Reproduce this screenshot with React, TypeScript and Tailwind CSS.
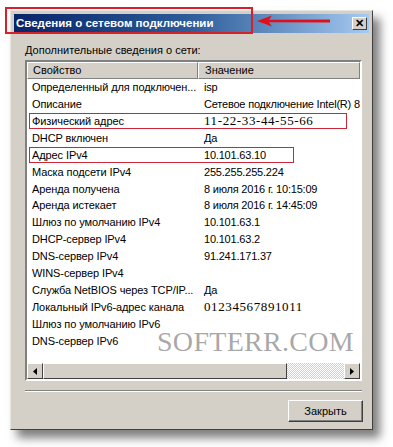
import React from 'react';

const rows: { name: string; value: string; serif?: boolean; mark?: string }[] = [
  { name: 'Определенный для подключен...', value: 'isp' },
  { name: 'Описание', value: 'Сетевое подключение Intel(R) 8' },
  { name: 'Физический адрес', value: '11-22-33-44-55-66', serif: true, mark: 'w-[318px]' },
  { name: 'DHCP включен', value: 'Да' },
  { name: 'Адрес IPv4', value: '10.101.63.10', mark: 'w-[265px]' },
  { name: 'Маска подсети IPv4', value: '255.255.255.224' },
  { name: 'Аренда получена', value: '8 июля 2016 г. 10:15:09' },
  { name: 'Аренда истекает', value: '8 июля 2016 г. 14:45:09' },
  { name: 'Шлюз по умолчанию IPv4', value: '10.101.63.1' },
  { name: 'DHCP-сервер IPv4', value: '10.101.63.2' },
  { name: 'DNS-сервер IPv4', value: '91.241.171.37' },
  { name: 'WINS-сервер IPv4', value: '' },
  { name: 'Служба NetBIOS через TCP/IP...', value: 'Да' },
  { name: 'Локальный IPv6-адрес канала', value: '01234567891011', serif: true },
  { name: 'Шлюз по умолчанию IPv6', value: '' },
  { name: 'DNS-сервер IPv6', value: '' },
];

export default function App() {
  return (
    <div className="relative w-[393px] h-[447px] bg-white overflow-hidden font-['Liberation_Sans',sans-serif] text-[11px] text-black">
      {/* dialog window */}
      <div className="ml-[10px] mt-[10px] w-[363px] h-[420px] bg-[#d4d0c8] p-[3px] flex flex-col shadow-[7px_8px_9px_rgba(0,0,0,0.5)] border border-t-[#e8e6e0] border-l-[#e8e6e0] border-r-[#404040] border-b-[#404040]">
        {/* title bar */}
        <div className="h-[19px] shrink-0 flex items-center justify-between pl-[2px] pr-[2px] bg-gradient-to-r from-[#0a246a] via-[#2d5d9a] to-[#a6caf0]">
          <span className="text-white font-bold text-[11.5px] leading-none">Сведения о сетевом подключении</span>
          <div className="w-[15px] h-[13px] bg-[#d4d0c8] border border-t-white border-l-white border-r-[#404040] border-b-[#404040] flex items-center justify-center text-[11px] font-bold leading-none">
            ✕
          </div>
        </div>

        <div className="flex-1 flex flex-col pl-[11px] pr-[7px]">
          <div className="mt-[10px] h-[15px] leading-[15px]">Дополнительные сведения о сети:</div>

          {/* list view */}
          <div className="mt-[2px] h-[321px] flex flex-col bg-white border-2 border-t-[#808080] border-l-[#808080] border-r-white border-b-white overflow-hidden">
            <div className="h-[17px] shrink-0 flex bg-[#d4d0c8]">
              <div className="w-[171px] pl-[5px] leading-[15px] border border-t-white border-l-white border-r-[#808080] border-b-[#808080]">Свойство</div>
              <div className="flex-1 pl-[6px] leading-[15px] border border-t-white border-l-white border-r-[#808080] border-b-[#808080]">Значение</div>
            </div>

            <div className="relative flex-1 flex flex-col overflow-hidden">
              {rows.map((r) => (
                <div key={r.name} className="relative h-[16.9px] shrink-0 flex items-center whitespace-nowrap">
                  <div className="w-[171px] shrink-0 pl-[5px] overflow-hidden tracking-[-0.1px]">{r.name}</div>
                  <div className={`pl-[6px] ${r.serif ? "font-['Liberation_Serif',serif] text-[13px] tracking-[0.6px]" : 'tracking-[-0.2px]'}`}>{r.value}</div>
                  {r.mark && (
                    <div className={`absolute left-[2px] top-0 h-[16px] border border-[#c8283a] ${r.mark}`} />
                  )}
                </div>
              ))}
              <div className="absolute left-[130px] top-[249px] font-['Liberation_Serif',serif] text-[28px] leading-none text-[#8c8c8c]/75 tracking-[0.3px]">
                SOFTERR.COM
              </div>
            </div>

            {/* horizontal scrollbar */}
            <div className="h-[16px] shrink-0 flex bg-[repeating-conic-gradient(#d4d0c8_0_25%,#ffffff_0_50%)] bg-[length:2px_2px]">
              <div className="w-[16px] bg-[#d4d0c8] border border-t-white border-l-white border-r-[#404040] border-b-[#404040] flex items-center justify-center">
                <svg width="4" height="7" viewBox="0 0 4 7"><path d="M4 0 L0 3.5 L4 7 Z" fill="#000" /></svg>
              </div>
              <div className="w-[244px] bg-[#d4d0c8] border border-t-white border-l-white border-r-[#404040] border-b-[#404040]" />
              <div className="flex-1" />
              <div className="w-[16px] bg-[#d4d0c8] border border-t-white border-l-white border-r-[#404040] border-b-[#404040] flex items-center justify-center">
                <svg width="4" height="7" viewBox="0 0 4 7"><path d="M0 0 L4 3.5 L0 7 Z" fill="#000" /></svg>
              </div>
            </div>
          </div>

          {/* separator */}
          <div className="mt-[9px] h-[2px] border-t border-t-[#808080] border-b border-b-white" />

          <div className="mt-[8px] flex justify-end -mr-[1px]">
            <button className="w-[75px] h-[22px] bg-[#d4d0c8] border border-t-white border-l-white border-r-[#404040] border-b-[#404040] shadow-[inset_-1px_-1px_0_#808080] text-[11px] leading-none">
              Закрыть
            </button>
          </div>
        </div>
      </div>

      {/* annotation: red frame round the title and arrow */}
      <div className="absolute left-[5px] top-[7px] w-[248px] h-[27px] border-2 border-[#d8202a]" />
      <svg className="absolute left-[254px] top-[14px]" width="80" height="14" viewBox="0 0 80 14">
        <path d="M3 7 L18 1.5 L15 5.8 L76 5.6 L76 8.4 L15 8.2 L18 12.5 Z" fill="#e0101a" />
      </svg>
    </div>
  );
}
